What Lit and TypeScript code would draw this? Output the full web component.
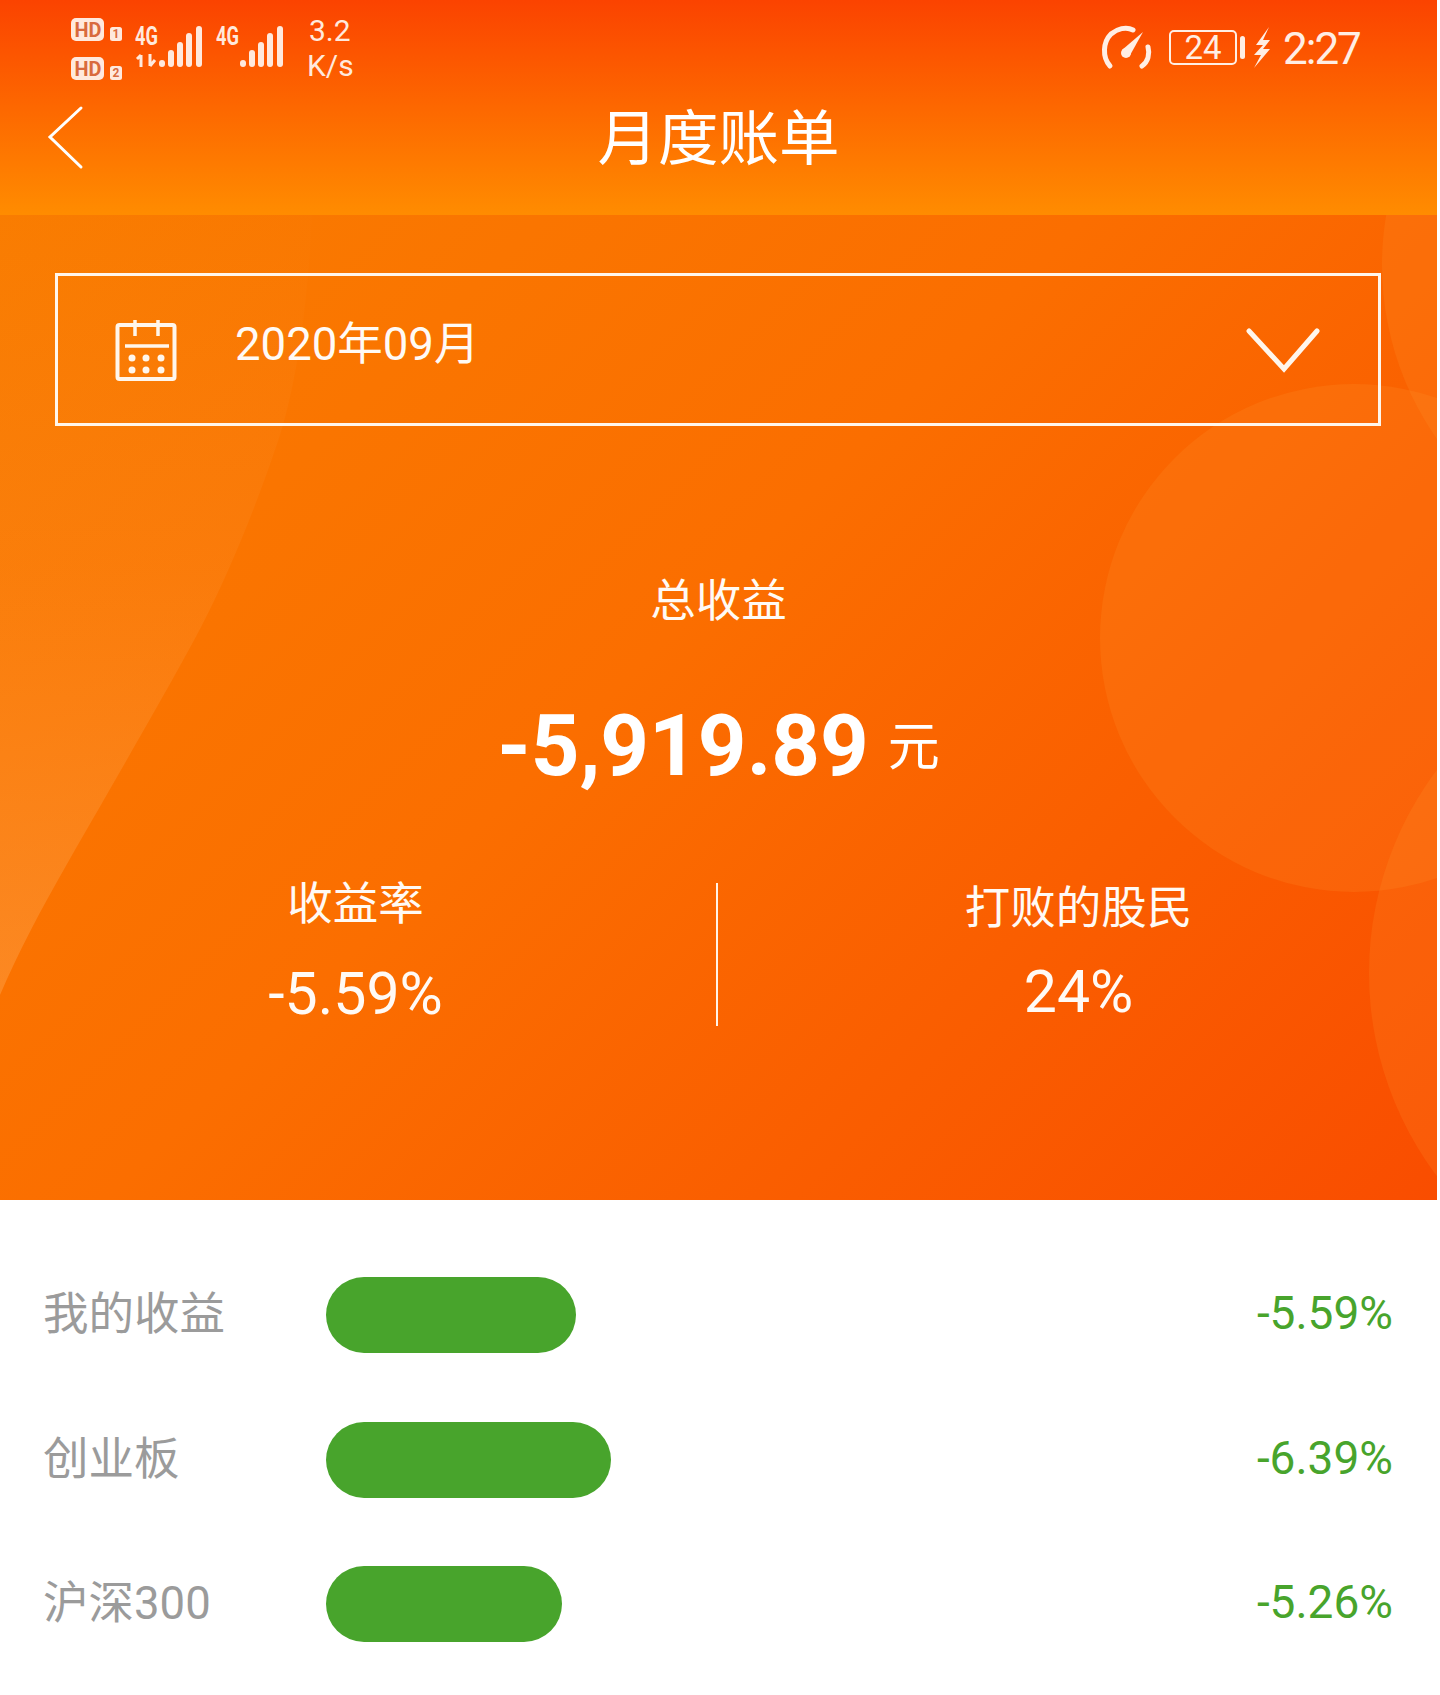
import { LitElement, html, css, svg } from "lit";
import { customElement } from "lit/decorators.js";

const rows = [
  { name: "我的收益", value: "-5.59%", width: 250 },
  { name: "创业板", value: "-6.39%", width: 285 },
  { name: "沪深300", value: "-5.26%", width: 236 },
];

// signal bars: [x, top], all of them end at y=67
const bars1 = [[159, 60], [168, 50], [177, 42], [186, 33], [196, 26]];
const bars2 = [[240, 60], [249, 50], [258, 42], [267, 33], [277, 26]];

const simBadge = (y: number, num: string) => svg`
  <rect x="71" y=${y} width="33" height="23" rx="5" fill="#ffe9dd"></rect>
  <text x="88" y=${y + 18.5} class="hd" text-anchor="middle" textLength="27" lengthAdjust="spacingAndGlyphs">HD</text>
  <rect x="110" y=${y + 9} width="12" height="14" rx="2.5" fill="#ffe9dd"></rect>
  <text x="116" y=${y + 20} class="sim" text-anchor="middle">${num}</text>
`;

@customElement("app-root")
export class AppRoot extends LitElement {
  static styles = css`
    :host {
      display: block;
      font-family: Roboto, "Noto Sans CJK SC", sans-serif;
    }
    .page {
      width: 1440px;
      height: 1695px;
      background: #fff;
      overflow: hidden;
    }
    .inner {
      width: 1437px;
    }
    .top {
      height: 215px;
      background: linear-gradient(180deg, #fb4300 0%, #ff8c00 100%);
      color: #ffeee4;
    }
    .status {
      display: flex;
      height: 100px;
      align-items: flex-start;
    }
    .status-left {
      display: block;
      flex: none;
      width: 300px;
      height: 100px;
    }
    .speed {
      width: 60px;
      margin-top: 13px;
      margin-left: 7px;
      font-size: 30px;
      line-height: 35px;
      color: #ffe9dd;
    }
    .speed div:first-child {
      padding-left: 2px;
    }
    .status-right {
      display: flex;
      align-items: flex-start;
      margin-left: auto;
      margin-right: 77px;
    }
    .gauge {
      display: block;
      width: 56px;
      height: 70px;
    }
    .battery {
      display: flex;
      align-items: center;
      justify-content: center;
      box-sizing: border-box;
      width: 68px;
      height: 35px;
      margin: 30px 0 0 14px;
      border: 2px solid #ffeee4;
      border-radius: 5px;
      font-size: 33px;
      line-height: 31px;
    }
    .tip {
      width: 5px;
      height: 23px;
      margin: 36px 0 0 3px;
      border-radius: 2.5px;
      background: #ffeee4;
    }
    .bolt {
      display: block;
      width: 17px;
      height: 41px;
      margin: 27px 0 0 8px;
    }
    .time {
      width: 77px;
      margin: 27px 0 0 13px;
      font-size: 44px;
      line-height: 44px;
      letter-spacing: -2px;
      white-space: nowrap;
    }
    .hd {
      font: 700 20px Roboto, sans-serif;
      fill: #d96a3e;
    }
    .sim {
      font: 700 12px Roboto, sans-serif;
      fill: #d96a3e;
    }
    .net {
      font: 700 25px Roboto, sans-serif;
      fill: #ffe9dd;
    }
    .nav {
      position: relative;
      display: flex;
      justify-content: center;
      height: 76px;
      align-items: center;
    }
    .back {
      position: absolute;
      left: 46px;
      top: 4px;
    }
    .title {
      padding-top: 4px;
      font-size: 60.5px;
      line-height: 76px;
      color: #fff;
    }
    .hero {
      position: relative;
      height: 985px;
      overflow: hidden;
      background: linear-gradient(135deg, #f97c00 0%, #fb6e00 45%, #f94d00 100%);
      color: #fffaf5;
    }
    .deco {
      position: absolute;
      left: 0;
      top: 0;
    }
    .hero > div {
      position: relative;
    }
    .picker {
      display: flex;
      align-items: center;
      box-sizing: border-box;
      height: 153px;
      margin: 58px 56px 0 55px;
      padding-left: 56px;
      border: 3px solid #fff6ec;
    }
    .picker .date {
      margin-left: 57px;
      margin-bottom: 9px;
      font-size: 45.5px;
      line-height: 60px;
    }
    .picker .arrow {
      margin-left: auto;
      margin-right: 57px;
    }
    .label {
      margin-top: 146px;
      font-size: 45.5px;
      line-height: 60px;
      text-align: center;
    }
    .amount {
      display: flex;
      justify-content: center;
      align-items: center;
      margin-top: 64px;
      height: 100px;
      line-height: 100px;
      font-size: 85px;
      font-weight: 700;
      color: #fff;
    }
    .amount span {
      margin-left: 19px;
      margin-top: 4px;
      font-size: 52px;
      font-weight: 400;
    }
    .stats {
      display: grid;
      grid-template-columns: 716px 2px 1fr;
      margin-top: 87px;
      height: 143px;
    }
    .stat {
      text-align: center;
      font-size: 45.5px;
      line-height: 50px;
    }
    .stat.left {
      padding-right: 5px;
      margin-top: -3px;
    }
    .stat .num {
      margin-top: 34px;
      font-size: 59px;
      line-height: 60px;
    }
    .stat.right .num {
      margin-top: 28px;
    }
    .stat.right {
      padding-top: 1px;
      padding-left: 2px;
    }
    .divider {
      background: #fff3e8;
    }
    .list {
      display: flex;
      flex-direction: column;
      gap: 68.5px;
      padding: 77px 44px 0 43px;
    }
    .row {
      display: flex;
      align-items: center;
      height: 76px;
    }
    .row .name {
      flex: none;
      width: 283px;
      margin-top: -10px;
      font-size: 45.5px;
      color: #9b9b9b;
    }
    .bar {
      height: 76px;
      border-radius: 38px;
      background: #48a42c;
    }
    .row .val {
      margin-left: auto;
      margin-top: -4px;
      font-size: 46px;
      color: #48a42c;
    }
  `;

  renderStatusLeft() {
    return html`
      <svg class="status-left" viewBox="0 0 300 100">
        ${simBadge(18, "1")}
        ${simBadge(57, "2")}
        <text x="135" y="45" class="net" textLength="23" lengthAdjust="spacingAndGlyphs">4G</text>
        <path d="M141 55v12M137 59l4-4M150 54v12M150 66l5-6" stroke="#ffe9dd" stroke-width="3" fill="none"></path>
        ${bars1.map(([x, top]) => svg`<rect x=${x} y=${top} width="6" height=${67 - top} rx="3" fill="#ffe9dd"></rect>`)}
        <text x="216" y="45" class="net" textLength="23" lengthAdjust="spacingAndGlyphs">4G</text>
        ${bars2.map(([x, top]) => svg`<rect x=${x} y=${top} width="6" height=${67 - top} rx="3" fill="#ffe9dd"></rect>`)}
      </svg>
    `;
  }

  renderStatusRight() {
    return html`
      <div class="status-right">
        <svg class="gauge" viewBox="1100 0 56 70">
          <g fill="none" stroke="#ffeee4" stroke-width="5" stroke-linecap="round">
            <path d="M1111 66C1103 57 1104 42 1112 34C1118 29 1127 26 1134 30"></path>
            <path d="M1149 47C1151 54 1149 62 1143 66"></path>
          </g>
          <polygon points="1123,50 1144,32 1130,57" fill="#ffeee4"></polygon>
          <circle cx="1127" cy="53" r="5" fill="#ffeee4"></circle>
        </svg>
        <div class="battery">24</div>
        <div class="tip"></div>
        <svg class="bolt" viewBox="1254 27 17 41">
          <polygon fill="#ffeee4" points="1270,27 1257,45 1264,45 1255,55 1262,55 1255,68 1271,49 1264,49 1271,40 1264,40"></polygon>
        </svg>
        <div class="time">2:27</div>
      </div>
    `;
  }

  render() {
    return html`
      <div class="page">
        <div class="inner">
          <div class="top">
            <div class="status">
              ${this.renderStatusLeft()}
              <div class="speed"><div>3.2</div><div>K/s</div></div>
              ${this.renderStatusRight()}
            </div>
            <div class="nav">
              <svg class="back" width="40" height="68" viewBox="0 0 40 68">
                <path d="M35 4L4 33L35 63" fill="none" stroke="#fff" stroke-width="3" stroke-linecap="round" stroke-linejoin="miter"></path>
              </svg>
              <div class="title">月度账单</div>
            </div>
          </div>
          <div class="hero">
            <svg class="deco" width="1437" height="985" viewBox="0 0 1437 985">
              <defs>
                <linearGradient id="wave" x1="0" y1="0" x2="0" y2="1">
                  <stop offset="0" stop-color="#ffb060" stop-opacity="0.01"></stop>
                  <stop offset="0.45" stop-color="#ffb060" stop-opacity="0.11"></stop>
                  <stop offset="1" stop-color="#ffb060" stop-opacity="0.36"></stop>
                </linearGradient>
              </defs>
              <path d="M0 0H312C308 90 296 170 280 220C262 275 233 351 200 414C168 474 133 534 67 649C40 696 18 738 0 780Z" fill="url(#wave)"></path>
              <circle cx="1354" cy="423" r="254" fill="#ff9a30" fill-opacity="0.18"></circle>
              <circle cx="1707" cy="758" r="338" fill="#ff9a30" fill-opacity="0.18"></circle>
              <circle cx="1685" cy="50" r="303" fill="#ff9a30" fill-opacity="0.18"></circle>
            </svg>
            <div class="picker">
              <svg width="64" height="64" viewBox="0 0 64 64" fill="none" stroke="#fff6ec" stroke-width="4">
                <rect x="3.5" y="7" width="57" height="54" rx="2"></rect>
                <path d="M21 2V18M44 2V18M11 28H55" stroke-width="3.5"></path>
                <g fill="#fff6ec" stroke="none">
                  <circle cx="18" cy="40" r="3.5"></circle>
                  <circle cx="32" cy="40" r="3.5"></circle>
                  <circle cx="47" cy="40" r="3.5"></circle>
                  <circle cx="18" cy="52" r="3.5"></circle>
                  <circle cx="32" cy="52" r="3.5"></circle>
                  <circle cx="47" cy="52" r="3.5"></circle>
                </g>
              </svg>
              <div class="date">2020年09月</div>
              <svg class="arrow" width="76" height="50" viewBox="0 0 76 50">
                <path d="M4 6L39 44L72 6" fill="none" stroke="#fff6ec" stroke-width="5" stroke-linecap="round"></path>
              </svg>
            </div>
            <div class="label">总收益</div>
            <div class="amount">-5,919.89<span>元</span></div>
            <div class="stats">
              <div class="stat left">
                <div>收益率</div>
                <div class="num">-5.59%</div>
              </div>
              <div class="divider"></div>
              <div class="stat right">
                <div>打败的股民</div>
                <div class="num">24%</div>
              </div>
            </div>
          </div>
          <div class="list">
            ${rows.map(
              (r) => html`
                <div class="row">
                  <div class="name">${r.name}</div>
                  <div class="bar" style="width: ${r.width}px"></div>
                  <div class="val">${r.value}</div>
                </div>
              `
            )}
          </div>
        </div>
      </div>
    `;
  }
}
